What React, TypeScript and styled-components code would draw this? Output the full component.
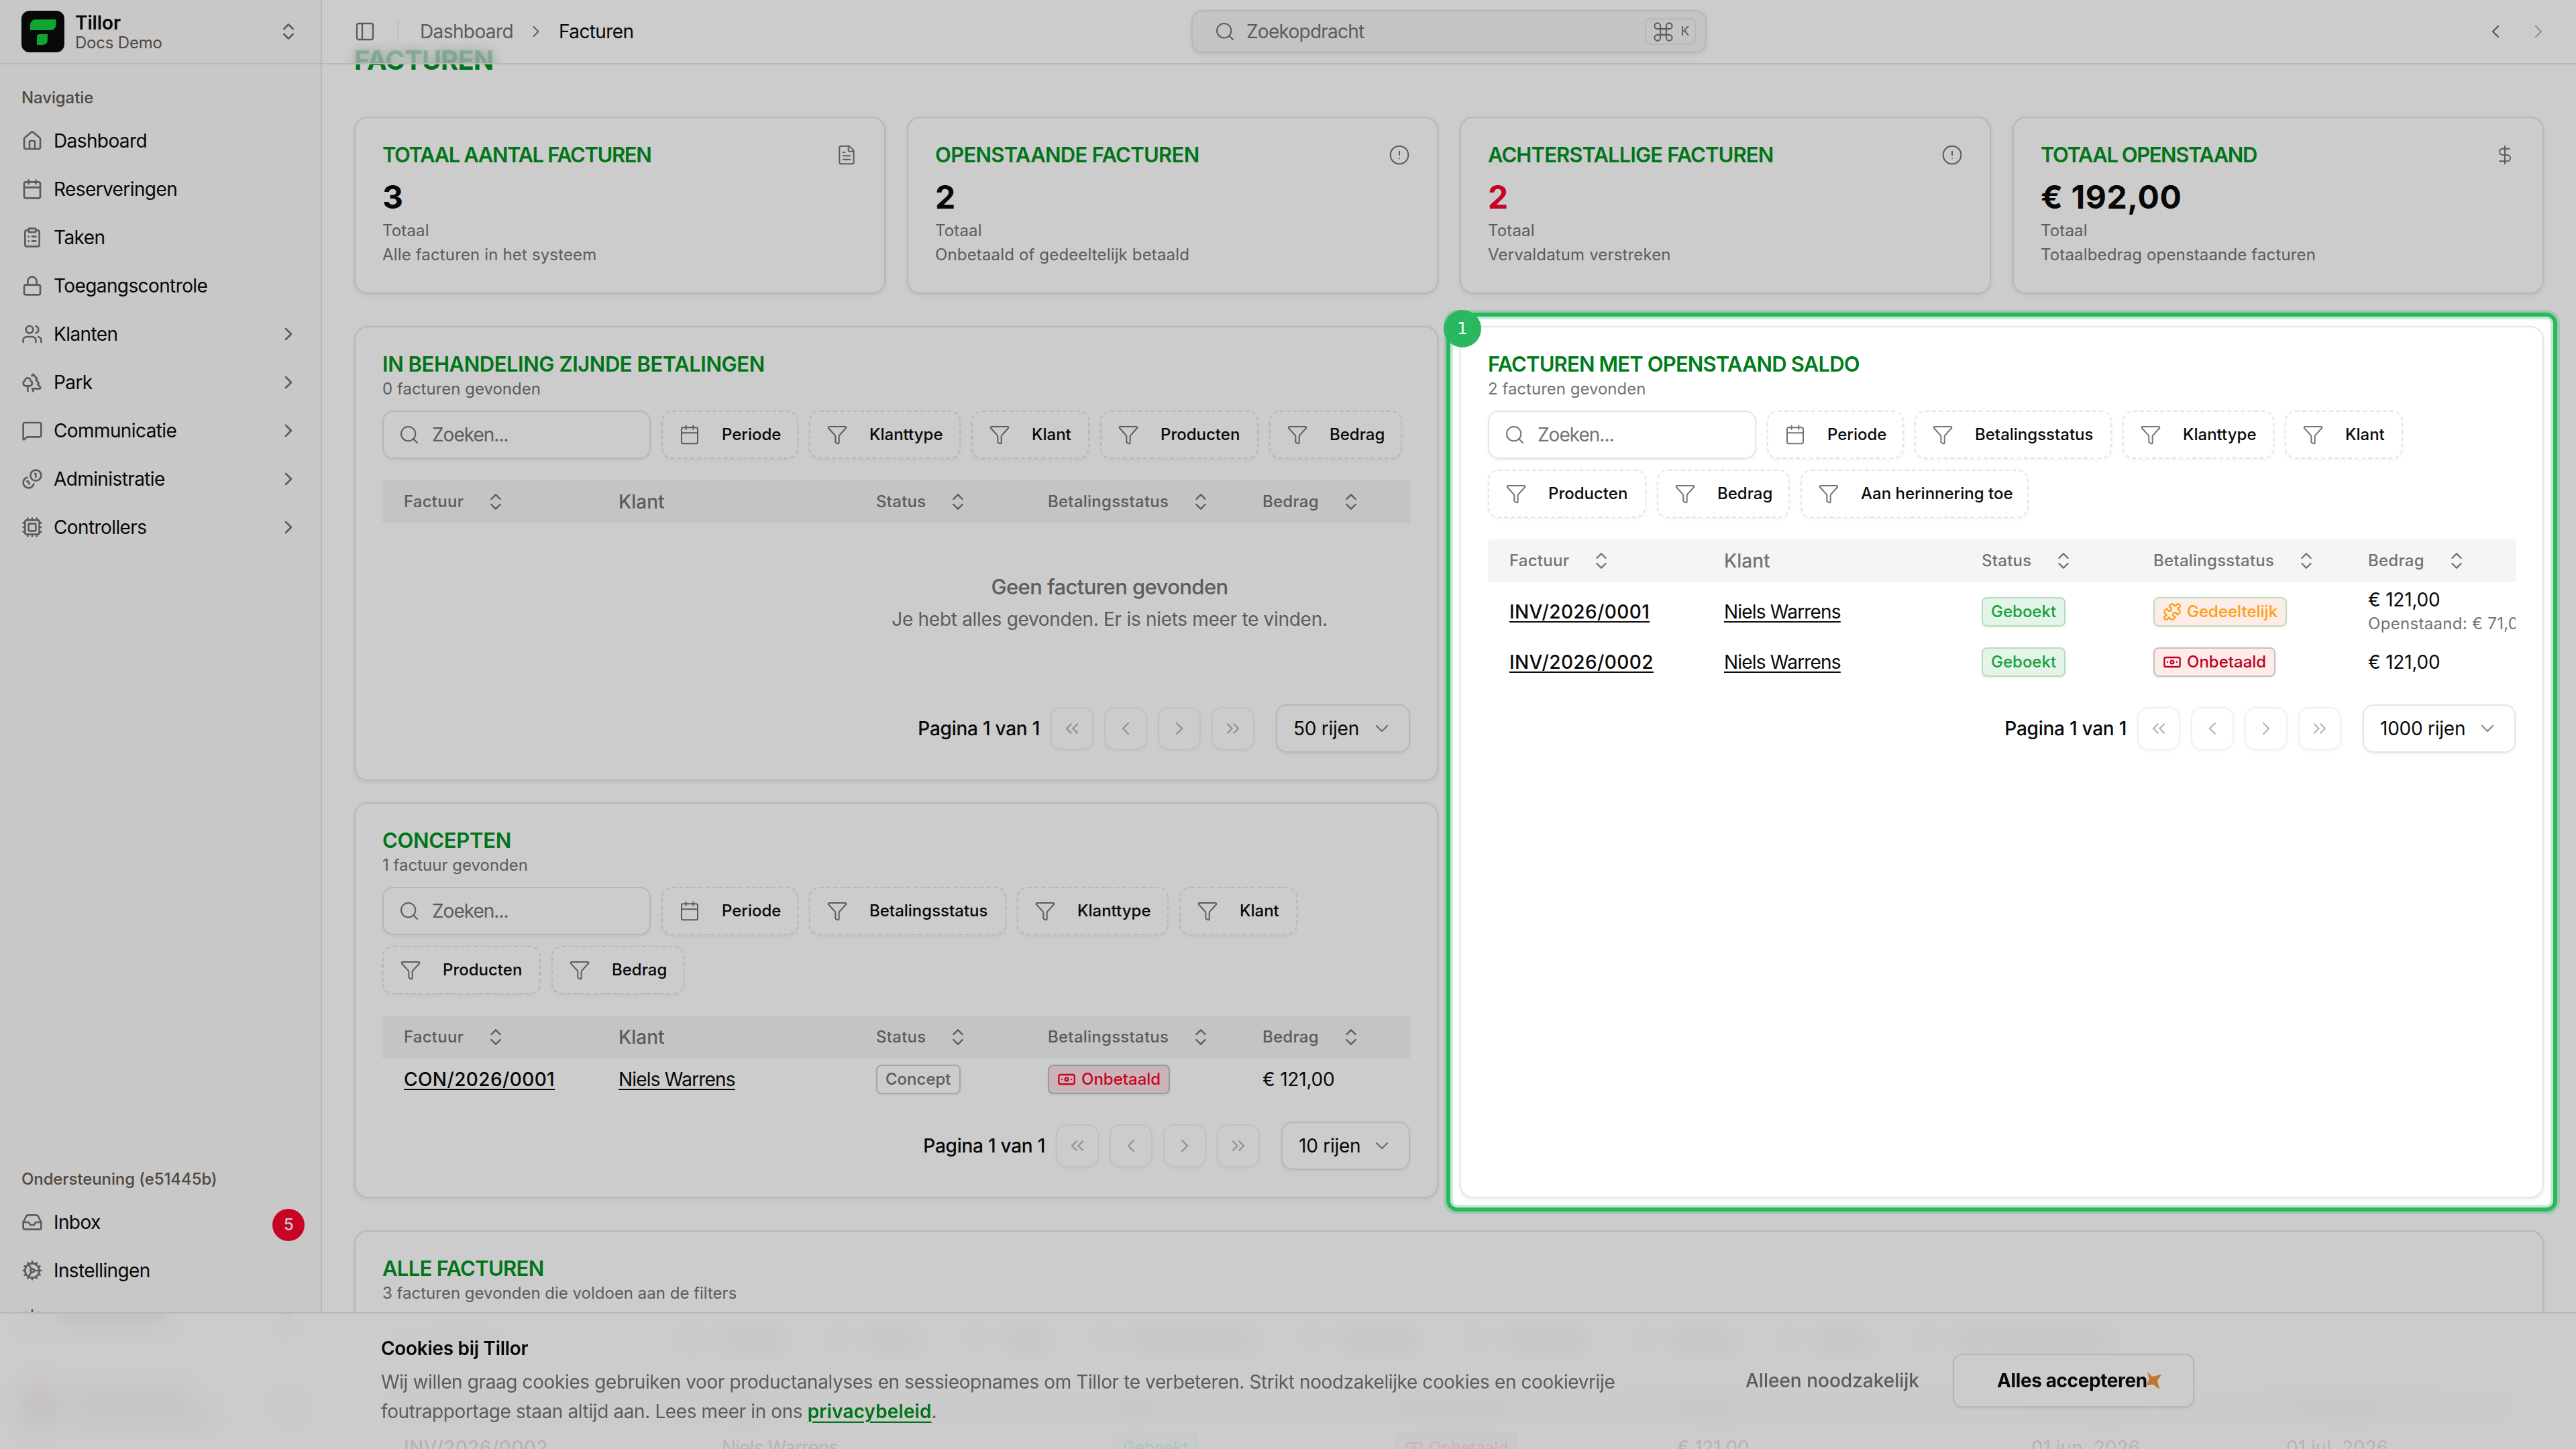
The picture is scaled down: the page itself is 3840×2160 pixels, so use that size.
import type { ReactNode } from "react";
import styled, { createGlobalStyle } from "styled-components";
import {
	Banknote,
	Calendar,
	ChevronDown,
	ChevronLeft,
	ChevronRight,
	ChevronsLeft,
	ChevronsRight,
	ChevronsUpDown,
	CircleAlert,
	ClipboardList,
	Command,
	Cog,
	Cpu,
	DollarSign,
	FileText,
	Funnel,
	House,
	Inbox,
	Lock,
	MessageSquare,
	PanelLeft,
	Puzzle,
	Search,
	Sun,
	Trees,
	Users,
	type LucideIcon,
} from "lucide-react";

const GlobalStyle = createGlobalStyle`
	*, *::before, *::after {
		box-sizing: border-box;
	}
	body {
		margin: 0;
		background: #ffffff;
		color: #0a0a0a;
		font-family: Inter, "Liberation Sans", sans-serif;
		font-size: 28px;
		line-height: 40px;
	}
	h1, h2, p {
		margin: 0;
	}
	svg {
		display: block;
		flex-shrink: 0;
	}
`;

const Page = styled.div`
	position: relative;
	display: flex;
	width: 3840px;
	height: 2160px;
	overflow: hidden;
`;

/* Sidebar */

const Aside = styled.aside`
	display: flex;
	flex-direction: column;
	width: 480px;
	flex-shrink: 0;
	background: #fafafa;
	border-right: 2px solid #e5e5e5;
`;

const Brand = styled.div`
	display: flex;
	align-items: center;
	height: 96px;
	padding: 0 32px;
	border-bottom: 2px solid #e5e5e5;
	svg:last-child {
		margin-left: auto;
		color: #737373;
	}
`;

const BrandText = styled.div`
	margin-left: 16px;
	padding-top: 2px;
`;

const BrandName = styled.div`
	font-weight: 600;
	line-height: 32px;
	letter-spacing: -0.1px;
`;

const BrandSub = styled.div`
	font-size: 24px;
	line-height: 28px;
	letter-spacing: -0.2px;
	color: #665950;
`;

const NavLabel = styled.div`
	padding-left: 32px;
	font-size: 24px;
	line-height: 56px;
	font-weight: 500;
	letter-spacing: -0.1px;
	color: #665950;
`;

const NavItem = styled.div`
	display: flex;
	align-items: center;
	height: 72px;
	padding: 0 32px;
	letter-spacing: -0.6px;
	svg {
		color: #737373;
	}
	span {
		margin-left: 16px;
	}
	svg:last-child:not(:first-child) {
		margin-left: auto;
	}
`;

const NavTop = styled.div`
	padding-top: 22px;
	flex: 1;
`;

const NavBottom = styled.div`
	height: 430px;
`;

const Count = styled.b`
	display: flex;
	align-items: center;
	justify-content: center;
	width: 48px;
	height: 48px;
	margin: 8px -8px 0 auto;
	border-radius: 50%;
	background: #fa052e;
	color: #ffffff;
	font-size: 24px;
	font-weight: 500;
`;

const Account = styled.div`
	display: flex;
	align-items: center;
	gap: 20px;
	height: 96px;
	margin-top: 46px;
	padding: 0 32px;
	svg {
		margin-left: auto;
		color: #737373;
	}
`;

const Avatar = styled.div`
	width: 56px;
	height: 64px;
	border-radius: 16px;
	background: linear-gradient(#d98a8a, #8fb5a0);
`;

/* Soft stand-in line, only seen through the cookie bar */
const Smudge = styled.div<{ $width: number }>`
	width: ${(p) => p.$width}px;
	height: 20px;
	margin: 12px 0;
	border-radius: 10px;
	background: #a8a8a8;
`;

/* Main column */

const Main = styled.main`
	flex: 1;
	min-width: 0;
`;

const Header = styled.header`
	position: relative;
	z-index: 10;
	display: flex;
	align-items: center;
	height: 96px;
	padding: 0 40px 0 48px;
	overflow: hidden;
	background: #ffffff;
	border-bottom: 2px solid #e5e5e5;
	color: #737373;
`;

const HeaderGhost = styled.div`
	position: absolute;
	left: 48px;
	top: 66px;
	font-size: 40px;
	line-height: 48px;
	font-weight: 700;
	letter-spacing: -0.9px;
	color: rgba(60, 170, 110, 0.36);
	text-shadow: 0 0 16px rgba(40, 110, 75, 0.4);
`;

const Divider = styled.div`
	width: 2px;
	height: 32px;
	margin: 0 32px;
	background: #f1f1f1;
`;

const Crumbs = styled.div`
	display: flex;
	align-items: center;
	width: 1150px;
	gap: 20px;
	letter-spacing: -0.6px;
	b {
		color: #0a0a0a;
		font-weight: 400;
	}
`;

const CommandField = styled.div`
	display: flex;
	align-items: center;
	width: 768px;
	height: 64px;
	padding: 0 14px 0 32px;
	border: 2px solid #e5e5e5;
	border-radius: 16px;
	background: #f5f5f5;
	box-shadow: 0 2px 6px rgba(0, 0, 0, 0.08);
	letter-spacing: -0.75px;
	span {
		margin-left: 16px;
	}
`;

const Kbd = styled.kbd`
	display: flex;
	align-items: center;
	justify-content: center;
	gap: 8px;
	width: 76px;
	height: 40px;
	margin-left: auto;
	border: 2px solid #e5e5e5;
	border-radius: 8px;
	font-family: inherit;
	font-size: 19px;
`;

const Pager = styled.div`
	display: flex;
	gap: 32px;
	margin-left: auto;
	svg:last-child {
		opacity: 0.5;
	}
`;

const Content = styled.div`
	margin-top: -30px;
	padding: 0 48px;
`;

const PageTitle = styled.h1`
	margin-bottom: 60px;
	font-size: 40px;
	line-height: 48px;
	font-weight: 700;
	letter-spacing: -0.9px;
	color: #00931f;
`;

const Box = styled.section`
	min-width: 0;
	padding: 40px;
	border: 2px solid #e5e5e5;
	border-radius: 20px;
	background: #ffffff;
	box-shadow: 0 2px 6px rgba(0, 0, 0, 0.08);
`;

const Title = styled.h2<{ $bright?: boolean; $tracking?: number }>`
	font-size: 31px;
	line-height: 30px;
	font-weight: 600;
	letter-spacing: ${(p) => p.$tracking ?? -0.8}px;
	color: ${(p) => (p.$bright ? "#007c1b" : "#00931f")};
`;

const Stats = styled.div`
	display: grid;
	grid-template-columns: repeat(4, 1fr);
	gap: 32px;
	margin-bottom: 48px;
`;

const StatBox = styled(Box)`
	padding-bottom: 38px;
`;

const StatHead = styled.div`
	display: flex;
	align-items: center;
	justify-content: space-between;
	height: 30px;
	svg {
		color: #737373;
	}
`;

const StatValue = styled.div<{ $danger?: boolean }>`
	margin: 18px 0 2px;
	font-size: 48px;
	line-height: 60px;
	font-weight: 700;
	letter-spacing: 0.6px;
	color: ${(p) => (p.$danger ? "#fa052e" : "#0a0a0a")};
`;

const Small = styled.p`
	font-size: 24px;
	line-height: 36px;
	letter-spacing: 0.15px;
	color: #737373;
`;

const Panels = styled.div`
	display: grid;
	grid-template-columns: 1fr 1fr;
	gap: 32px;
	margin-bottom: 48px;
`;

const Column = styled.div`
	position: relative;
	display: flex;
	flex-direction: column;
	gap: 32px;
	min-width: 0;
`;

const FullBox = styled(Box)`
	flex: 1;
`;

const Found = styled.p`
	margin-bottom: 10px;
	font-size: 24px;
	line-height: 44px;
	color: #737373;
`;

const Toolbar = styled.div`
	display: flex;
	flex-wrap: wrap;
	gap: 16px;
`;

const SearchField = styled.div`
	display: flex;
	align-items: center;
	gap: 18px;
	width: 400px;
	height: 72px;
	padding: 0 22px;
	border: 2px solid #e5e5e5;
	border-radius: 16px;
	box-shadow: 0 2px 4px rgba(0, 0, 0, 0.06);
	color: #737373;
	letter-spacing: -1px;
`;

const FilterButton = styled.div<{ $width: number }>`
	display: flex;
	align-items: center;
	gap: 32px;
	width: ${(p) => p.$width}px;
	height: 72px;
	padding-left: 24px;
	border: 2px dashed #e5e5e5;
	border-radius: 16px;
	box-shadow: 0 2px 4px rgba(0, 0, 0, 0.05);
	font-size: 24px;
	font-weight: 500;
	white-space: nowrap;
	svg {
		color: #737373;
	}
`;

const Table = styled.div`
	margin-top: 32px;
	overflow: hidden;
	border-radius: 4px 4px 0 0;
`;

const Row = styled.div<{ $height: number; $wide?: boolean }>`
	display: grid;
	grid-template-columns: ${(p) =>
		p.$wide ? "474px 584px 420px 420px 528px 380px 340px" : "320px 384px 256px 320px 888px"};
	align-items: center;
	width: ${(p) => (p.$wide ? 3180 : 2168)}px;
	height: ${(p) => p.$height}px;
	> * {
		padding-left: 32px;
		white-space: nowrap;
	}
`;

const HeadRow = styled(Row)`
	background: #f5f5f5;
	color: #737373;
	font-weight: 500;
`;

const HeadCell = styled.div`
	display: flex;
	align-items: center;
	gap: 32px;
	font-size: 24px;
	letter-spacing: 0.25px;
`;

const Underlined = styled.span<{ $strong?: boolean }>`
	font-weight: ${(p) => (p.$strong ? 500 : 400)};
	letter-spacing: ${(p) => (p.$strong ? "0.4px" : "-0.8px")};
	text-decoration: underline;
	text-decoration-thickness: 2px;
	text-underline-offset: 4px;
`;

const tones = {
	green: { color: "#18a03a", bg: "#e3f5e9", border: "#b5ddb9" },
	orange: { color: "#fb9f16", bg: "#feece8", border: "#b9dfb9" },
	red: { color: "#c10023", bg: "#fdecea", border: "#c6bfbf" },
	redSoft: { color: "#fa052e", bg: "#fde2e7", border: "#b3c9bd" },
	plain: { color: "#737373", bg: "transparent", border: "#bfdac9" },
};

const Tag = styled.span<{ $tone: keyof typeof tones }>`
	display: inline-flex;
	align-items: center;
	gap: 8px;
	height: 44px;
	padding: 0 12px;
	border: 2px solid ${(p) => tones[p.$tone].border};
	border-radius: 8px;
	background: ${(p) => tones[p.$tone].bg};
	box-shadow: 0 2px 4px rgba(0, 0, 0, 0.06);
	color: ${(p) => tones[p.$tone].color};
	font-size: 24px;
	font-weight: 500;
	vertical-align: middle;
`;

const Amount = styled.div`
	line-height: 36px;
	letter-spacing: -0.2px;
	small {
		display: block;
		font-size: 24px;
		letter-spacing: 0.3px;
		color: #737373;
	}
`;

const Empty = styled.div`
	width: 2168px;
	height: 238px;
	padding-top: 71px;
	text-align: center;
	line-height: 48px;
	letter-spacing: -0.3px;
	color: #737373;
	b {
		display: block;
		font-size: 31px;
		font-weight: 500;
		letter-spacing: -0.6px;
	}
`;

const Pagination = styled.div`
	display: flex;
	align-items: center;
	justify-content: flex-end;
	gap: 16px;
	height: 72px;
	margin-top: 32px;
	font-weight: 500;
	letter-spacing: -0.25px;
`;

const PageButton = styled.div`
	display: flex;
	align-items: center;
	justify-content: center;
	width: 64px;
	height: 64px;
	border: 2px solid #e5e5e5;
	border-radius: 16px;
	box-shadow: 0 2px 4px rgba(0, 0, 0, 0.06);
	color: #737373;
	opacity: 0.5;
`;

const Select = styled.div<{ $width: number }>`
	display: flex;
	align-items: center;
	justify-content: space-between;
	width: ${(p) => p.$width}px;
	height: 72px;
	margin-left: 16px;
	padding: 0 24px;
	border: 2px solid #e5e5e5;
	border-radius: 16px;
	box-shadow: 0 2px 4px rgba(0, 0, 0, 0.06);
	font-weight: 400;
	svg {
		color: #8a8a8a;
	}
`;

/* Tour highlight: dims everything but the column it sits in */

const Spotlight = styled.div`
	position: absolute;
	inset: -20px;
	z-index: 50;
	border: 6px solid #29b85f;
	border-radius: 16px;
	box-shadow:
		inset 0 0 0 4px rgba(41, 184, 95, 0.28),
		0 0 0 4px rgba(41, 184, 95, 0.28),
		0 0 0 4000px rgba(0, 0, 0, 0.2);
`;

const Step = styled.div`
	position: absolute;
	left: -24px;
	top: -24px;
	z-index: 51;
	width: 56px;
	height: 56px;
	border-radius: 50%;
	background: #29b85f;
	color: #ffffff;
	font-family: "DejaVu Sans", sans-serif;
	font-size: 25px;
	line-height: 56px;
	text-align: center;
`;

/* Cookie bar */

const CookieBar = styled.div`
	position: absolute;
	left: 0;
	right: 0;
	bottom: 0;
	z-index: 20;
	display: flex;
	height: 204px;
	padding-left: 568px;
	overflow: hidden;
	border-top: 2px solid #e5e5e5;
	background: rgba(255, 255, 255, 0.86);
	backdrop-filter: blur(16px);
`;

const CookieText = styled.div`
	width: 1900px;
	padding-top: 32px;
	line-height: 44px;
	letter-spacing: -0.39px;
	color: #737373;
	white-space: nowrap;
	b {
		display: block;
		color: #0a0a0a;
		font-weight: 600;
		letter-spacing: -0.3px;
		line-height: 40px;
		margin-bottom: 8px;
	}
	a {
		color: #00931f;
		font-weight: 600;
		text-decoration: underline;
		text-decoration-thickness: 2px;
		text-underline-offset: 5px;
		letter-spacing: 0.1px;
	}
`;

const CookieActions = styled.div`
	display: flex;
	align-items: center;
	height: 80px;
	margin: 60px 0 0 134px;
	color: #737373;
	font-weight: 500;
	letter-spacing: 0;
`;

const Accept = styled.div`
	display: flex;
	align-items: center;
	width: 360px;
	height: 80px;
	margin-left: 50px;
	padding-left: 64px;
	border: 2px solid #e5e5e5;
	border-radius: 14px;
	background: #ffffff;
	box-shadow: 0 2px 4px rgba(0, 0, 0, 0.06);
	color: #0a0a0a;
	font-weight: 700;
	letter-spacing: -0.4px;
	svg {
		margin-left: -2px;
	}
`;

const GhostRow = styled.div`
	position: absolute;
	left: 570px;
	bottom: -29px;
	opacity: 0.12;
`;

const Logo = () => (
	<svg width="64" height="62" viewBox="0 0 64 62">
		<rect width="64" height="62" rx="12" fill="#0a0a0a" />
		<path d="M22 13h29.500v7q0 9-9 9H13v-7q0-9 9-9z" fill="#14d040" />
		<path d="M27 35h12v8q0 8-8 8h-8V39q0-4 4-4z" fill="#14d040" />
	</svg>
);

const Star = () => (
	<svg width="24" height="26" viewBox="0 0 24 26">
		<path d="M2 0l7 7 14-3-6 9 3 13-9-7-11 1 5-9z" fill="#ef9440" />
	</svg>
);

const CoinPair = () => (
	<svg
		width="32"
		height="32"
		viewBox="0 0 24 24"
		fill="none"
		stroke="currentColor"
		strokeWidth="2"
		strokeLinecap="round"
		strokeLinejoin="round"
	>
		<path d="M13.744 17.736a6 6 0 1 1-7.48-7.48" />
		<path d="M15 6h1v4" />
		<path d="m6.134 14.768.866-.5 2 3.464" />
		<circle cx="16" cy="8" r="6" />
	</svg>
);

const nav: { icon: ReactNode; title: string; nested?: boolean }[] = [
	{ icon: <House size={32} />, title: "Dashboard" },
	{ icon: <Calendar size={32} />, title: "Reserveringen" },
	{ icon: <ClipboardList size={32} />, title: "Taken" },
	{ icon: <Lock size={32} />, title: "Toegangscontrole" },
	{ icon: <Users size={32} />, title: "Klanten", nested: true },
	{ icon: <Trees size={32} />, title: "Park", nested: true },
	{ icon: <MessageSquare size={32} />, title: "Communicatie", nested: true },
	{ icon: <CoinPair />, title: "Administratie", nested: true },
	{ icon: <Cpu size={32} />, title: "Controllers", nested: true },
];

type Stat = {
	icon: LucideIcon;
	title: string;
	tracking: number;
	value: string;
	note: string;
	danger?: boolean;
};

const stats: Stat[] = [
	{
		icon: FileText,
		title: "TOTAAL AANTAL FACTUREN",
		tracking: -1.4,
		value: "3",
		note: "Alle facturen in het systeem",
	},
	{
		icon: CircleAlert,
		title: "OPENSTAANDE FACTUREN",
		tracking: -0.7,
		value: "2",
		note: "Onbetaald of gedeeltelijk betaald",
	},
	{
		icon: CircleAlert,
		title: "ACHTERSTALLIGE FACTUREN",
		tracking: -0.9,
		value: "2",
		note: "Vervaldatum verstreken",
		danger: true,
	},
	{
		icon: DollarSign,
		title: "TOTAAL OPENSTAAND",
		tracking: -1.45,
		value: "€ 192,00",
		note: "Totaalbedrag openstaande facturen",
	},
];

const filterWidths: Record<string, number> = {
	Periode: 204,
	Klanttype: 226,
	Klant: 176,
	Producten: 236,
	Bedrag: 198,
	Betalingsstatus: 294,
	Status: 190,
	"Aan herinnering toe": 340,
};

const Filters = ({ names }: { names: string[] }) => (
	<Toolbar>
		<SearchField>
			<Search size={32} strokeWidth={1.5} />
			Zoeken...
		</SearchField>
		{names.map((name, idx) => (
			<FilterButton key={idx} $width={filterWidths[name]}>
				{name === "Periode" ? (
					<Calendar size={32} strokeWidth={1.5} />
				) : (
					<Funnel size={32} strokeWidth={1.5} />
				)}
				{name}
			</FilterButton>
		))}
	</Toolbar>
);

const Sortable = ({ children }: { children: ReactNode }) => (
	<HeadCell>
		{children}
		<ChevronsUpDown size={32} strokeWidth={1.75} />
	</HeadCell>
);

const TableHead = ({ wide }: { wide?: boolean }) => (
	<HeadRow $height={64} $wide={wide}>
		<Sortable>Factuur</Sortable>
		<div>Klant</div>
		<Sortable>Status</Sortable>
		<Sortable>Betalingsstatus</Sortable>
		<Sortable>Bedrag</Sortable>
		{wide && <Sortable>Factuurdatum</Sortable>}
		{wide && <Sortable>Vervaldatum</Sortable>}
	</HeadRow>
);

const Pages = ({ rows, width }: { rows: number; width: number }) => (
	<Pagination>
		Pagina 1 van 1
		{[ChevronsLeft, ChevronLeft, ChevronRight, ChevronsRight].map((Icon, idx) => (
			<PageButton key={idx}>
				<Icon size={32} strokeWidth={1.75} />
			</PageButton>
		))}
		<Select $width={width}>
			{rows} rijen
			<ChevronDown size={32} strokeWidth={1.75} />
		</Select>
	</Pagination>
);

const Unpaid = ({ soft }: { soft?: boolean }) => (
	<Tag $tone={soft ? "redSoft" : "red"}>
		<Banknote size={28} />
		Onbetaald
	</Tag>
);

const Sidebar = () => (
	<Aside>
		<Brand>
			<Logo />
			<BrandText>
				<BrandName>Tillor</BrandName>
				<BrandSub>Docs Demo</BrandSub>
			</BrandText>
			<ChevronsUpDown size={32} />
		</Brand>
		<NavTop>
			<NavLabel>Navigatie</NavLabel>
			{nav.map(({ icon, title, nested }) => (
				<NavItem key={title}>
					{icon}
					<span>{title}</span>
					{nested && <ChevronRight size={32} />}
				</NavItem>
			))}
		</NavTop>
		<NavBottom>
			<NavLabel>Ondersteuning (e51445b)</NavLabel>
			<NavItem>
				<Inbox size={32} />
				<span>Inbox</span>
				<Count>5</Count>
			</NavItem>
			<NavItem>
				<Cog size={32} />
				<span>Instellingen</span>
			</NavItem>
			<NavItem>
				<Sun size={32} />
				<span>
					<Smudge $width={168} />
				</span>
				<ChevronRight size={32} />
			</NavItem>
			<Account>
				<Avatar />
				<div>
					<Smudge $width={170} />
					<Smudge $width={205} />
				</div>
				<ChevronsUpDown size={32} />
			</Account>
		</NavBottom>
	</Aside>
);

const TopBar = () => (
	<Header>
		<HeaderGhost aria-hidden>FACTUREN</HeaderGhost>
		<PanelLeft size={32} strokeWidth={1.75} />
		<Divider />
		<Crumbs>
			Dashboard
			<ChevronRight size={28} strokeWidth={1.75} />
			<b>Facturen</b>
		</Crumbs>
		<CommandField>
			<Search size={32} strokeWidth={1.5} />
			<span>Zoekopdracht</span>
			<Kbd>
				<Command size={35} strokeWidth={1.4} />K
			</Kbd>
		</CommandField>
		<Pager>
			<ChevronLeft size={32} strokeWidth={1.75} />
			<ChevronRight size={32} strokeWidth={1.75} />
		</Pager>
	</Header>
);

const Cookies = () => (
	<CookieBar>
		<GhostRow aria-hidden>
			<Row $height={62} $wide>
				<Underlined $strong>INV/2026/0002</Underlined>
				<Underlined>Niels Warrens</Underlined>
				<div>
					<Tag $tone="green">Geboekt</Tag>
				</div>
				<div>
					<Unpaid soft />
				</div>
				<Amount>€ 121,00</Amount>
				<div>01 jun. 2026</div>
				<div>01 jul. 2026</div>
			</Row>
		</GhostRow>
		<CookieText>
			<b>Cookies bij Tillor</b>
			Wij willen graag cookies gebruiken voor productanalyses en sessieopnames om Tillor te verbeteren. Strikt
			noodzakelijke cookies en cookievrije
			<br />
			foutrapportage staan altijd aan. Lees meer in ons <a>privacybeleid</a>.
		</CookieText>
		<CookieActions>
			Alleen noodzakelijk
			<Accept>
				Alles accepteren
				<Star />
			</Accept>
		</CookieActions>
	</CookieBar>
);

const App = () => (
	<Page>
		<GlobalStyle />
		<Sidebar />
		<Main>
			<TopBar />
			<Content>
				<PageTitle>FACTUREN</PageTitle>
				<Stats>
					{stats.map(({ icon: Icon, title, tracking, value, note, danger }) => (
						<StatBox key={title}>
							<StatHead>
								<Title $tracking={tracking}>{title}</Title>
								<Icon size={32} strokeWidth={1.5} />
							</StatHead>
							<StatValue $danger={danger}>{value}</StatValue>
							<Small>Totaal</Small>
							<Small>{note}</Small>
						</StatBox>
					))}
				</Stats>
				<Panels>
					<Column>
						<Box>
							<Title $tracking={-0.45}>IN BEHANDELING ZIJNDE BETALINGEN</Title>
							<Found>0 facturen gevonden</Found>
							<Filters names={["Periode", "Klanttype", "Klant", "Producten", "Bedrag"]} />
							<Table>
								<TableHead />
								<Empty>
									<b>Geen facturen gevonden</b>
									Je hebt alles gevonden. Er is niets meer te vinden.
								</Empty>
							</Table>
							<Pages rows={50} width={200} />
						</Box>
						<Box>
							<Title $tracking={-0.3}>CONCEPTEN</Title>
							<Found>1 factuur gevonden</Found>
							<Filters
								names={["Periode", "Betalingsstatus", "Klanttype", "Klant", "Producten", "Bedrag"]}
							/>
							<Table>
								<TableHead />
								<Row $height={62}>
									<Underlined $strong>CON/2026/0001</Underlined>
									<Underlined>Niels Warrens</Underlined>
									<div>
										<Tag $tone="plain">Concept</Tag>
									</div>
									<div>
										<Unpaid soft />
									</div>
									<Amount>€ 121,00</Amount>
								</Row>
							</Table>
							<Pages rows={10} width={192} />
						</Box>
					</Column>
					<Column>
						<FullBox>
							<Title $bright $tracking={-0.85}>
								FACTUREN MET OPENSTAAND SALDO
							</Title>
							<Found>2 facturen gevonden</Found>
							<Filters
								names={[
									"Periode",
									"Betalingsstatus",
									"Klanttype",
									"Klant",
									"Producten",
									"Bedrag",
									"Aan herinnering toe",
								]}
							/>
							<Table>
								<TableHead />
								<Row $height={88}>
									<Underlined $strong>INV/2026/0001</Underlined>
									<Underlined>Niels Warrens</Underlined>
									<div>
										<Tag $tone="green">Geboekt</Tag>
									</div>
									<div>
										<Tag $tone="orange">
											<Puzzle size={28} />
											Gedeeltelijk
										</Tag>
									</div>
									<Amount>
										€ 121,00
										<small>Openstaand: € 71,00</small>
									</Amount>
								</Row>
								<Row $height={62}>
									<Underlined $strong>INV/2026/0002</Underlined>
									<Underlined>Niels Warrens</Underlined>
									<div>
										<Tag $tone="green">Geboekt</Tag>
									</div>
									<div>
										<Unpaid />
									</div>
									<Amount>€ 121,00</Amount>
								</Row>
							</Table>
							<Pages rows={1000} width={228} />
						</FullBox>
						<Spotlight />
						<Step>1</Step>
					</Column>
				</Panels>
				<Box>
					<Title $tracking={-0.7}>ALLE FACTUREN</Title>
					<Found>3 facturen gevonden die voldoen aan de filters</Found>
					<Filters
						names={[
							"Periode",
							"Status",
							"Klant",
							"Betalingsstatus",
							"Klanttype",
							"Producten",
							"Bedrag",
							"Status",
							"Aan herinnering toe",
						]}
					/>
					<Table>
						<TableHead wide />
					</Table>
				</Box>
			</Content>
		</Main>
		<Cookies />
	</Page>
);

export default App;
